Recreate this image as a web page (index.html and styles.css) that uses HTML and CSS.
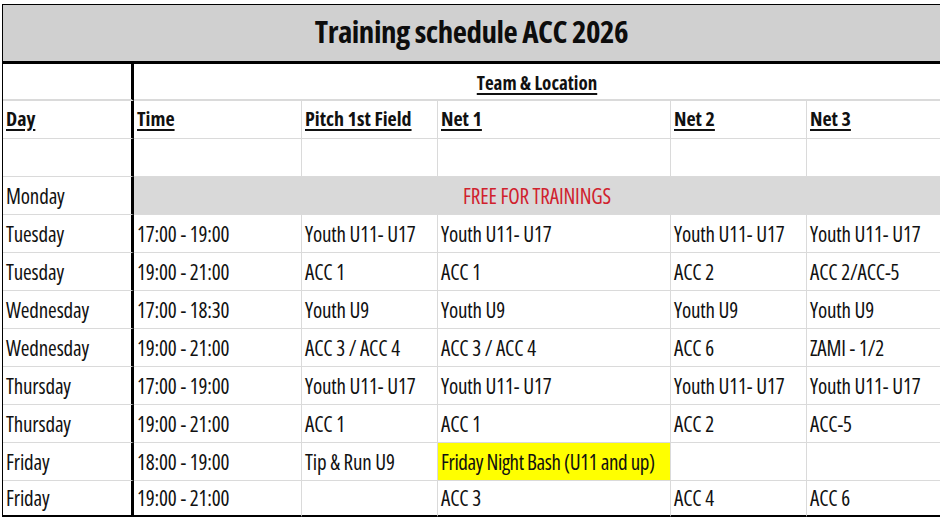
FILE: index.html
```html
<!DOCTYPE html>
<html lang="en">
<head>
<meta charset="utf-8">
<title>Training schedule ACC 2026</title>
<link rel="stylesheet" href="styles.css">
</head>
<body>
<div class="sheet">
  <div class="title">Training schedule ACC 2026</div>

  <div class="c day team-row"></div>
  <div class="c team-row team">Team &amp; Location</div>

  <div class="c day hd">Day</div>
  <div class="c hd">Time</div>
  <div class="c hd">Pitch 1st Field</div>
  <div class="c hd">Net 1</div>
  <div class="c hd">Net 2</div>
  <div class="c hd last">Net 3</div>

  <div class="c day"></div>
  <div class="c"></div>
  <div class="c"></div>
  <div class="c"></div>
  <div class="c"></div>
  <div class="c last"></div>

  <div class="c day">Monday</div>
  <div class="c free">FREE FOR TRAININGS</div>

  <div class="c day">Tuesday</div>
  <div class="c">17:00 - 19:00</div>
  <div class="c">Youth U11- U17</div>
  <div class="c">Youth U11- U17</div>
  <div class="c">Youth U11- U17</div>
  <div class="c last">Youth U11- U17</div>

  <div class="c day">Tuesday</div>
  <div class="c">19:00 - 21:00</div>
  <div class="c">ACC 1</div>
  <div class="c">ACC 1</div>
  <div class="c">ACC 2</div>
  <div class="c last">ACC 2/ACC-5</div>

  <div class="c day">Wednesday</div>
  <div class="c">17:00 - 18:30</div>
  <div class="c">Youth U9</div>
  <div class="c">Youth U9</div>
  <div class="c">Youth U9</div>
  <div class="c last">Youth U9</div>

  <div class="c day">Wednesday</div>
  <div class="c">19:00 - 21:00</div>
  <div class="c">ACC 3 / ACC 4</div>
  <div class="c">ACC 3 / ACC 4</div>
  <div class="c">ACC 6</div>
  <div class="c last">ZAMI - 1/2</div>

  <div class="c day">Thursday</div>
  <div class="c">17:00 - 19:00</div>
  <div class="c">Youth U11- U17</div>
  <div class="c">Youth U11- U17</div>
  <div class="c">Youth U11- U17</div>
  <div class="c last">Youth U11- U17</div>

  <div class="c day">Thursday</div>
  <div class="c">19:00 - 21:00</div>
  <div class="c">ACC 1</div>
  <div class="c">ACC 1</div>
  <div class="c">ACC 2</div>
  <div class="c last">ACC-5</div>

  <div class="c day">Friday</div>
  <div class="c">18:00 - 19:00</div>
  <div class="c">Tip &amp; Run U9</div>
  <div class="c bash">Friday Night Bash (U11 and up)</div>
  <div class="c"></div>
  <div class="c last"></div>

  <div class="c day end">Friday</div>
  <div class="c end">19:00 - 21:00</div>
  <div class="c end"></div>
  <div class="c end">ACC 3</div>
  <div class="c end">ACC 4</div>
  <div class="c end last">ACC 6</div>
</div>
</body>
</html>
```

FILE: styles.css
```css
html, body {
  margin: 0;
  padding: 0;
  background: #ffffff;
}

body {
  font-family: "Open Sans", "Liberation Sans", sans-serif;
  font-stretch: 75%;
  color: #111111;
  overflow: hidden;
}

.sheet {
  margin: 4px 0 0 2px;
  width: 938px;
  border-left: 1px solid #000;
  display: grid;
  grid-template-columns: 131px 168px 136px 233px 136px 133px;
}

.title {
  grid-column: 1 / -1;
  box-sizing: border-box;
  height: 60px;
  background: #d0d0d0;
  border-top: 1px solid #000;
  border-bottom: 3px solid #000;
  padding-bottom: 4px;
  display: flex;
  align-items: center;
  justify-content: center;
  font-weight: bold;
  font-size: 31px;
  letter-spacing: -0.5px;
  line-height: 40px;
  color: #0d0d0d;
}

.c {
  box-sizing: border-box;
  height: 38px;
  border-right: 1px solid #dadada;
  border-bottom: 1px solid #dadada;
  padding: 0 3px 7px 3px;
  display: flex;
  align-items: flex-end;
  white-space: nowrap;
  font-size: 21px;
  line-height: 22px;
  letter-spacing: -0.15px;
}

.c.day {
  border-right: 3px solid #000;
}

.c.last {
  border-right: none;
}

.team-row {
  height: 37px;
  border-bottom-width: 2px;
  padding-bottom: 5px;
}

.team {
  grid-column: 2 / -1;
  justify-content: center;
  border-right: none;
}

.hd, .team {
  font-weight: bold;
  font-size: 20px;
  letter-spacing: 0;
  text-decoration: underline;
  text-decoration-thickness: 2px;
  text-underline-offset: 3px;
}

.hd {
  padding-bottom: 8px;
}

.team {
  font-size: 19px;
}

.free {
  grid-column: 2 / -1;
  background: #d9d9d9;
  border-right: none;
  justify-content: center;
  color: #d0212d;
}

.bash {
  background: #ffff00;
  letter-spacing: -0.4px;
}

.end {
  height: 36px;
  border-bottom: 2px solid #000;
  padding-bottom: 6px;
}
```
